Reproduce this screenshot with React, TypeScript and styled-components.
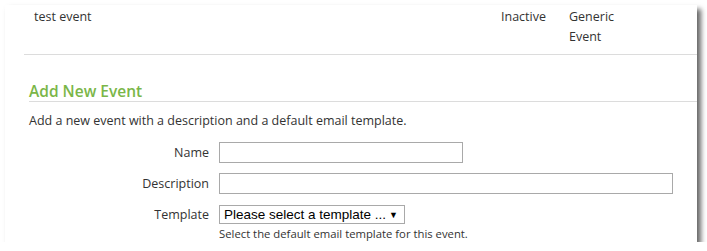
import styled, { createGlobalStyle } from 'styled-components';

const GlobalStyle = createGlobalStyle`
  html, body {
    margin: 0;
    padding: 0;
    background: #ffffff;
  }
  body {
    font-family: "Open Sans", "Noto Sans", sans-serif;
    color: #333;
  }
`;

const Panel = styled.div`
  margin: 5px 0 0 5px;
  width: 692px;
  height: 237px;
  background: #fff;
  overflow: hidden;
  box-shadow: 4px 4px 5px rgba(0, 0, 0, .6);
`;

const EventRow = styled.div`
  margin-left: 19px;
  display: grid;
  grid-template-columns: 467px 68px 62px 1fr;
  padding: 2px 0 7px 10px;
  border-bottom: 1px solid #dcdcdc;
  font-size: 12.5px;
  line-height: 20px;
  color: #333;
`;

const Cell = styled.div``;

const Section = styled.div`
  padding: 26px 0 0 24px;
`;

const Heading = styled.h3`
  margin: 0;
  font-size: 15.5px;
  font-weight: 600;
  color: #7ab648;
  line-height: 20px;
  border-bottom: 1px solid #dcdcdc;
`;

const Intro = styled.p`
  margin: 9px 0 11px;
  font-size: 12.5px;
  line-height: 20px;
`;

const Form = styled.div`
  display: grid;
  grid-template-columns: 180px 1fr;
  column-gap: 10px;
  row-gap: 10px;
  align-items: start;
`;

const Label = styled.label<{ $h?: number; $top?: number }>`
  text-align: right;
  font-size: 12.5px;
  line-height: ${p => p.$h ?? 21}px;
  margin-top: ${p => p.$top ?? 0}px;
`;

const TextInput = styled.input<{ $w: number }>`
  display: block;
  box-sizing: border-box;
  width: ${p => p.$w}px;
  height: 21px;
  border: 1px solid #a9a9a9;
  padding: 0 3px;
  margin: 0;
  font-family: "Liberation Sans", Arial, sans-serif;
  font-size: 13px;
`;

const Field = styled.div<{ $top?: number }>`
  display: flex;
  flex-direction: column;
  align-items: flex-start;
  margin-top: ${p => p.$top ?? 0}px;
`;

const SelectBox = styled.div`
  box-sizing: border-box;
  width: 186px;
  height: 19px;
  display: flex;
  align-items: center;
  justify-content: space-between;
  border: 1px solid #a9a9a9;
  padding: 0 6px 0 4px;
  font-family: "Liberation Sans", Arial, sans-serif;
  font-size: 13.5px;
  color: #000;
`;

const Arrow = styled.span`
  font-size: 9px;
`;

const Help = styled.div`
  margin-top: 3px;
  font-size: 11.3px;
  line-height: 14px;
  color: #333;
`;

export default function App() {
  return (
    <>
      <GlobalStyle />
      <Panel>
        <EventRow>
          <Cell>test event</Cell>
          <Cell>Inactive</Cell>
          <Cell>Generic Event</Cell>
          <Cell />
        </EventRow>
        <Section>
          <Heading>Add New Event</Heading>
          <Intro>Add a new event with a description and a default email template.</Intro>
          <Form>
            <Label>Name</Label>
            <Field><TextInput $w={244} /></Field>
            <Label>Description</Label>
            <Field><TextInput $w={454} /></Field>
            <Label $h={19} $top={1}>Template</Label>
            <Field $top={1}>
              <SelectBox>
                <span>Please select a template ...</span>
                <Arrow>▼</Arrow>
              </SelectBox>
              <Help>Select the default email template for this event.</Help>
            </Field>
          </Form>
        </Section>
      </Panel>
    </>
  );
}
